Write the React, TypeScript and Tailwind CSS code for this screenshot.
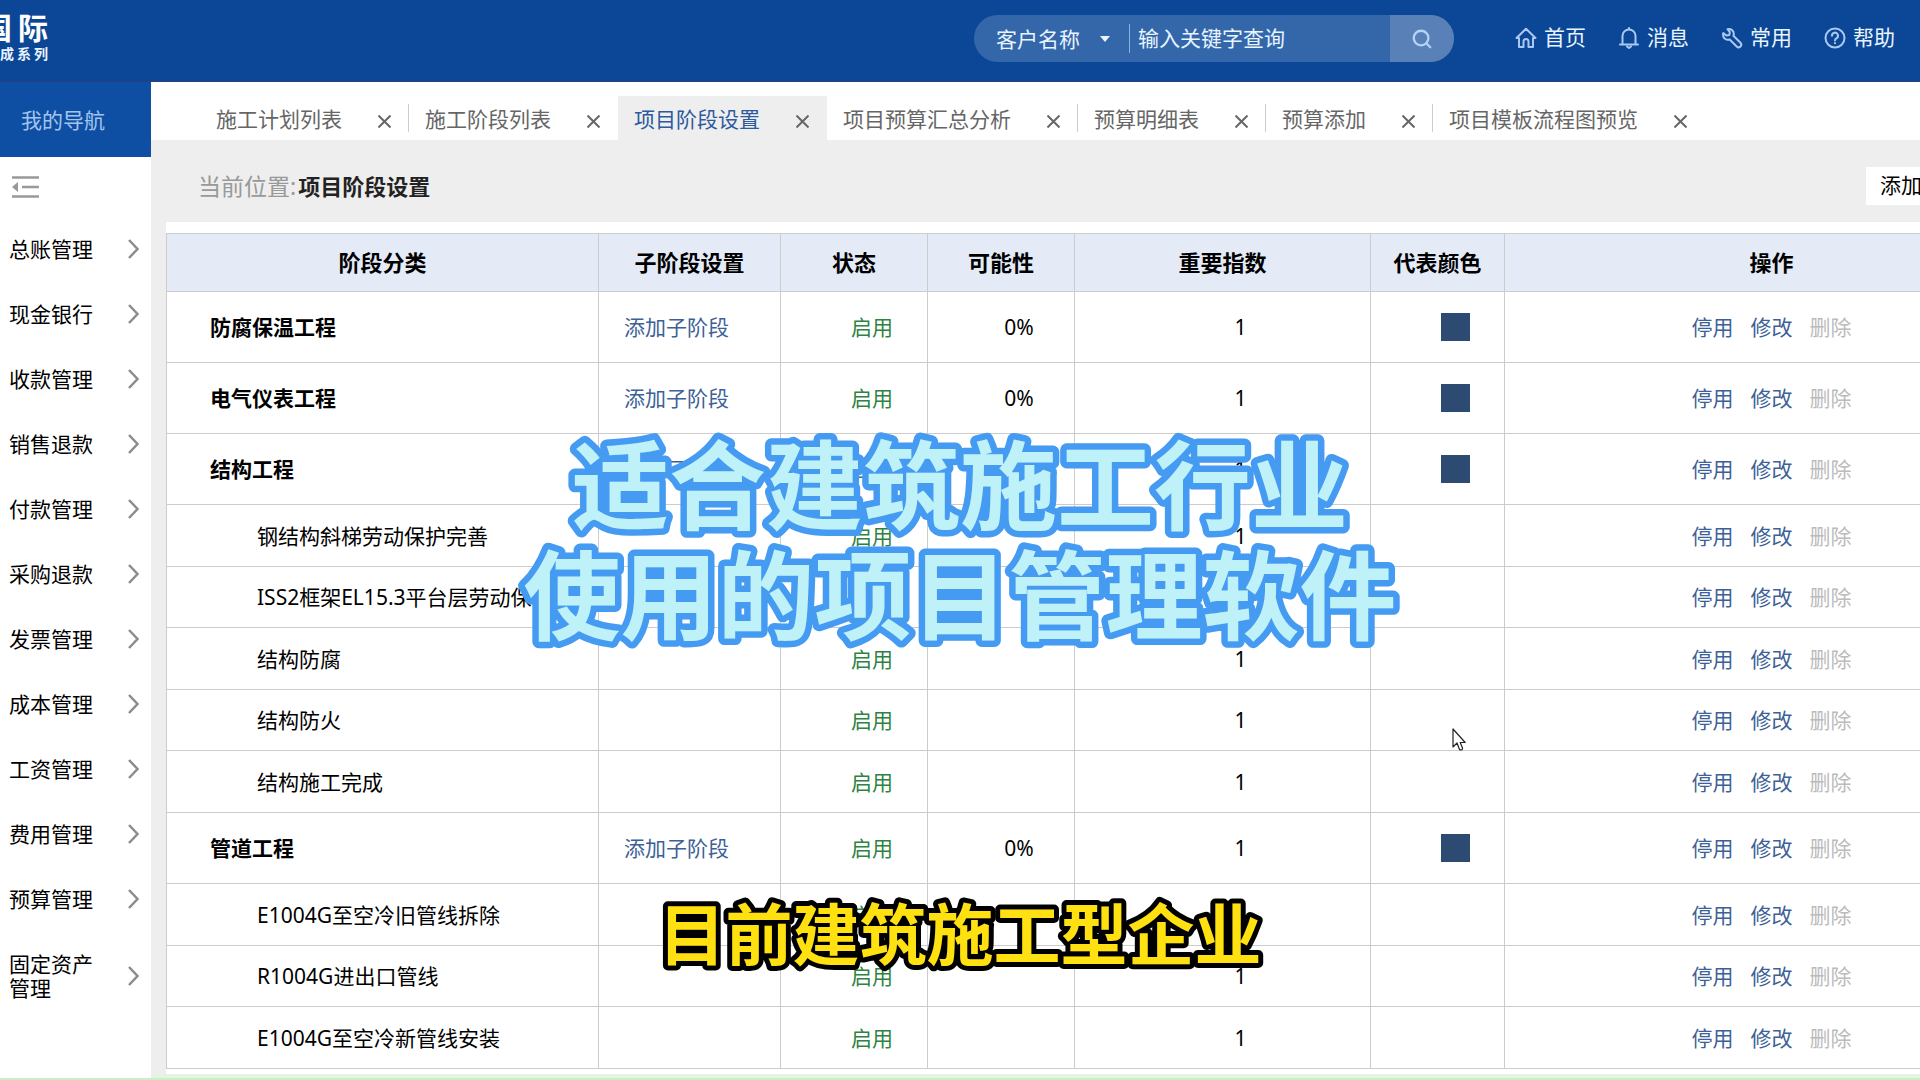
import { useState } from 'react';
import { Search } from 'lucide-react';

type Stage = {
  name: string;
  parent?: boolean;
};

const NAV_ITEMS = [
  '总账管理',
  '现金银行',
  '收款管理',
  '销售退款',
  '付款管理',
  '采购退款',
  '发票管理',
  '成本管理',
  '工资管理',
  '费用管理',
  '预算管理',
  '固定资产管理',
];

const TABS = [
  '施工计划列表',
  '施工阶段列表',
  '项目阶段设置',
  '项目预算汇总分析',
  '预算明细表',
  '预算添加',
  '项目模板流程图预览',
];

const STAGES: Stage[] = [
  { name: '防腐保温工程', parent: true },
  { name: '电气仪表工程', parent: true },
  { name: '结构工程', parent: true },
  { name: '钢结构斜梯劳动保护完善' },
  { name: 'ISS2框架EL15.3平台层劳动保护' },
  { name: '结构防腐' },
  { name: '结构防火' },
  { name: '结构施工完成' },
  { name: '管道工程', parent: true },
  { name: 'E1004G至空冷旧管线拆除' },
  { name: 'R1004G进出口管线' },
  { name: 'E1004G至空冷新管线安装' },
];

const COLUMNS = [
  { label: '阶段分类', width: 'w-[432px]' },
  { label: '子阶段设置', width: 'w-[182px]' },
  { label: '状态', width: 'w-[147px]' },
  { label: '可能性', width: 'w-[147px]' },
  { label: '重要指数', width: 'w-[296px]' },
  { label: '代表颜色', width: 'w-[134px]' },
  { label: '操作', width: 'w-[534px]' },
];

const iconProps = {
  viewBox: '0 0 22 22',
  fill: 'none',
  stroke: 'currentColor',
  strokeWidth: 2,
  strokeLinejoin: 'round' as const,
  strokeLinecap: 'round' as const,
  className: 'size-[22px] text-[#a9c9f2]',
};

const HomeIcon = () => (
  <svg {...iconProps}>
    <path d="M1.5 11 11 1.8 20.5 11H18v9h-4.5v-5.5a2.5 2.5 0 0 0-5 0V20H4v-9z" />
  </svg>
);

const BellIcon = () => (
  <svg {...iconProps}>
    <path d="M11 1v1.5M2 17.5h18M4.5 17.5V9a6.5 6.5 0 0 1 13 0v8.5M9 19.5l2 1.5 2-1.5" />
  </svg>
);

const WrenchIcon = () => (
  <svg {...iconProps}>
    <path d="M6.5 2.2c3-.8 6.3 1 6.3 4.6 0 .8-.1 1.3-.4 2l7 7a2.6 2.6 0 0 1-3.7 3.7l-7-7c-3.2 1.2-6.6-1-6.7-4.6 0-.7.1-1.2.3-1.8l3 2.5 3-.5.5-3z" />
  </svg>
);

const HelpIcon = () => (
  <svg {...iconProps}>
    <circle cx="11" cy="11" r="9.5" />
    <path d="M8 8.8a3 3 0 1 1 4.6 2.4c-1 .7-1.6 1-1.6 2.2M11 16v.2" />
  </svg>
);

const QUICK_LINKS = [
  { label: '首页', icon: <HomeIcon /> },
  { label: '消息', icon: <BellIcon /> },
  { label: '常用', icon: <WrenchIcon /> },
  { label: '帮助', icon: <HelpIcon /> },
];

function Header() {
  const [keyword, setKeyword] = useState('');

  return (
    <header className="flex h-[82px] shrink-0 items-start justify-between border-b border-[#2a3f7c] bg-[#0b4796] text-[#e8f4ff]">
      <div className="flex w-12 flex-col items-end pt-[10px] font-bold">
        <div className="flex gap-1.5 text-[30px] leading-9 text-white">
          <span>国</span>
          <span>际</span>
        </div>
        <div className="flex gap-[3px] text-sm leading-4">
          <span>成</span>
          <span>系</span>
          <span>列</span>
        </div>
      </div>

      <div className="flex items-start pt-[15px] pr-[25px]">
        <form className="flex h-[47px] w-[480px] items-center overflow-hidden rounded-full bg-[#3467aa]" onSubmit={(e) => e.preventDefault()}>
          <div className="flex h-[29px] w-[156px] items-center border-r border-[#8db1e0] pl-[22px]">
            <select aria-label="查询类型" className="w-[100px] appearance-none bg-transparent text-[21px] leading-7 outline-none">
              <option>客户名称</option>
            </select>
            <svg viewBox="0 0 10 6" className="ml-1 h-[6px] w-[10px] fill-[#e8f4ff]">
              <path d="M0 0h10L5 6z" />
            </svg>
          </div>
          <input
            aria-label="关键字"
            value={keyword}
            onChange={(e) => setKeyword(e.target.value)}
            placeholder="输入关键字查询"
            className="min-w-0 flex-1 bg-transparent pl-2 text-[21px] outline-none placeholder:text-[#e8f4ff]"
          />
          <button type="submit" aria-label="查询" className="flex h-full w-16 items-center justify-center bg-[#5a80b8] text-[#b4d2f7]">
            <Search size={22} strokeWidth={2.5} />
          </button>
        </form>
        <nav className="ml-[61px] flex h-[46px] items-center gap-8">
          {QUICK_LINKS.map((link) => (
            <a key={link.label} href="#" className="flex items-center gap-[7px] text-[21px]">
              {link.icon}
              {link.label}
            </a>
          ))}
        </nav>
      </div>
    </header>
  );
}

function Sidebar() {
  return (
    <aside className="flex w-[151px] shrink-0 flex-col bg-white">
      <div className="flex h-[75px] items-center bg-[#0f4fa3] pt-0.5 pl-[21px] text-[21px] text-[#a3c4ee]">我的导航</div>
      <button type="button" aria-label="收起导航" className="mt-[18px] mb-[19px] ml-3 w-[27px]">
        <svg viewBox="0 0 27 23" className="h-[23px] w-[27px] text-[#999]" fill="none" stroke="currentColor" strokeWidth="2.5">
          <path d="M0 2.500h27M10 12h17M0 21.500h27" />
          <path d="M0 12 6 7v10z" fill="currentColor" stroke="none" />
        </svg>
      </button>
      <nav>
        {NAV_ITEMS.map((item) => (
          <a key={item} href="#" className="flex items-center justify-between pt-5 pr-3 pb-[21px] pl-[9px]">
            <span className="w-[84px] text-[21px] leading-6">{item}</span>
            <svg viewBox="0 0 11 20" className="h-5 w-[11px] text-[#8c8c8c]" fill="none" stroke="currentColor" strokeWidth="2.5">
              <path d="M1 1l8.500 9L1 19" />
            </svg>
          </a>
        ))}
      </nav>
    </aside>
  );
}

function TabBar() {
  const [active, setActive] = useState('项目阶段设置');
  const activeIndex = TABS.indexOf(active);

  return (
    <div className="flex h-[58px] shrink-0 items-end bg-white pl-[49px]">
      {TABS.map((tab, i) => {
        const isActive = tab === active;
        const hasDivider = !isActive && i !== activeIndex - 1 && i < TABS.length - 1;
        return (
          <div key={tab} className={`flex h-11 shrink-0 items-center pl-4 ${isActive ? 'bg-[#eee]' : ''}`}>
            <button
              type="button"
              onClick={() => setActive(tab)}
              className={`pt-0.5 text-[21px] leading-7 whitespace-nowrap ${isActive ? 'text-[#2c5a9e]' : 'text-[#666]'}`}
            >
              {tab}
            </button>
            <button type="button" aria-label={`关闭${tab}`} className="mt-1.5 ml-9">
              <svg viewBox="0 0 13 13" className="size-[13px] text-[#666]" fill="none" stroke="currentColor" strokeWidth="2">
                <path d="M.5.5l12 12M12.5.5l-12 12" />
              </svg>
            </button>
            <span className={`ml-[17px] h-7 w-px ${hasDivider ? 'bg-[#ccc]' : ''}`} />
          </div>
        );
      })}
    </div>
  );
}

function StageRow({ stage }: { stage: Stage }) {
  const cell = 'border border-[#ccc] py-0 pr-0';

  return (
    <tr className={stage.parent ? 'h-[71px]' : 'h-[62px] odd:h-[61px]'}>
      <td className={`${cell} ${stage.parent ? 'pl-[43px] font-bold' : 'pl-[90px]'}`}>
        <div className="overflow-hidden whitespace-nowrap">{stage.name}</div>
      </td>
      <td className={`${cell} pl-[25px]`}>
        {stage.parent && <a href="#" className="text-[#3d6196]">添加子阶段</a>}
      </td>
      <td className={`${cell} pl-9 text-center text-[#2e8244]`}>启用</td>
      <td className={`${cell} pl-9 text-center`}>{stage.parent && '0%'}</td>
      <td className={`${cell} pl-9 text-center`}>1</td>
      <td className={`${cell} pl-9`}>
        {stage.parent && <div className="mx-auto h-7 w-[29px] bg-[#2d4a72]" />}
      </td>
      <td className={cell}>
        <div className="flex justify-center gap-[17px] text-[#3d6196]">
          <a href="#">停用</a>
          <a href="#">修改</a>
          <span className="text-[#bbb]">删除</span>
        </div>
      </td>
    </tr>
  );
}

function StageTable() {
  return (
    <table className="w-[1872px] table-fixed border-collapse text-[21px] leading-7">
      <thead>
        <tr className="h-[58px] bg-[#e4ebf7]">
          {COLUMNS.map((col) => (
            <th key={col.label} className={`border border-[#ccc] p-0 pb-0.5 text-[22px] font-bold ${col.width}`}>
              {col.label}
            </th>
          ))}
        </tr>
      </thead>
      <tbody>
        {STAGES.map((stage) => (
          <StageRow key={stage.name} stage={stage} />
        ))}
      </tbody>
    </table>
  );
}

// svg text, so the thick outline gets round corners
function Captions() {
  return (
    <svg
      className="pointer-events-none absolute inset-0 size-full font-['Noto_Sans_CJK_SC',sans-serif] font-bold [paint-order:stroke_fill]"
      textAnchor="middle"
      strokeLinejoin="round"
    >
      <g className="fill-[#bff1f8] stroke-[#459bf2] text-[97px]" strokeWidth="13">
        <text x="50%" y="522">适合建筑施工行业</text>
        <text x="50%" y="632">使用的项目管理软件</text>
      </g>
      <text x="50%" y="960" className="fill-[#ffe011] stroke-black text-[67px]" strokeWidth="10">
        目前建筑施工型企业
      </text>
    </svg>
  );
}

export default function App() {
  return (
    <div className="relative flex h-screen flex-col overflow-hidden bg-white font-['Noto_Sans','Noto_Sans_CJK_SC',sans-serif] text-black">
      <Header />
      <div className="flex min-h-0 flex-1">
        <Sidebar />
        <main className="flex min-w-0 flex-1 flex-col overflow-hidden bg-[#eee]">
          <TabBar />
          <div className="flex h-[82px] shrink-0 items-center justify-between pt-[10px] pl-[47px]">
            <p className="text-[23px] leading-8 text-[#999]">
              当前位置:<span className="ml-0.5 text-[22px] font-bold text-[#222]">项目阶段设置</span>
            </p>
            <div className="w-[54px]">
              <button type="button" className="h-[38px] bg-white px-3.5 text-[21px] whitespace-nowrap">添加</button>
            </div>
          </div>
          <div className="ml-[15px] min-h-0 flex-1 overflow-hidden bg-white pt-[11px]">
            <StageTable />
          </div>
          <div className="h-1 shrink-0 bg-[#e4f3e2]" />
        </main>
      </div>
      <div className="h-[2px] shrink-0 bg-[#c9efc6]" />

      <Captions />
      <svg viewBox="0 0 14 23" className="absolute top-[728px] left-[1452px] h-[23px] w-[14px]" fill="#fff" stroke="#222" strokeWidth="1.2" strokeLinejoin="round">
        <path d="M1 1v18l4-4 2.5 6.500c1.500 1 3.500 0 3-1.500L8.200 14.500h5z" />
      </svg>
    </div>
  );
}
